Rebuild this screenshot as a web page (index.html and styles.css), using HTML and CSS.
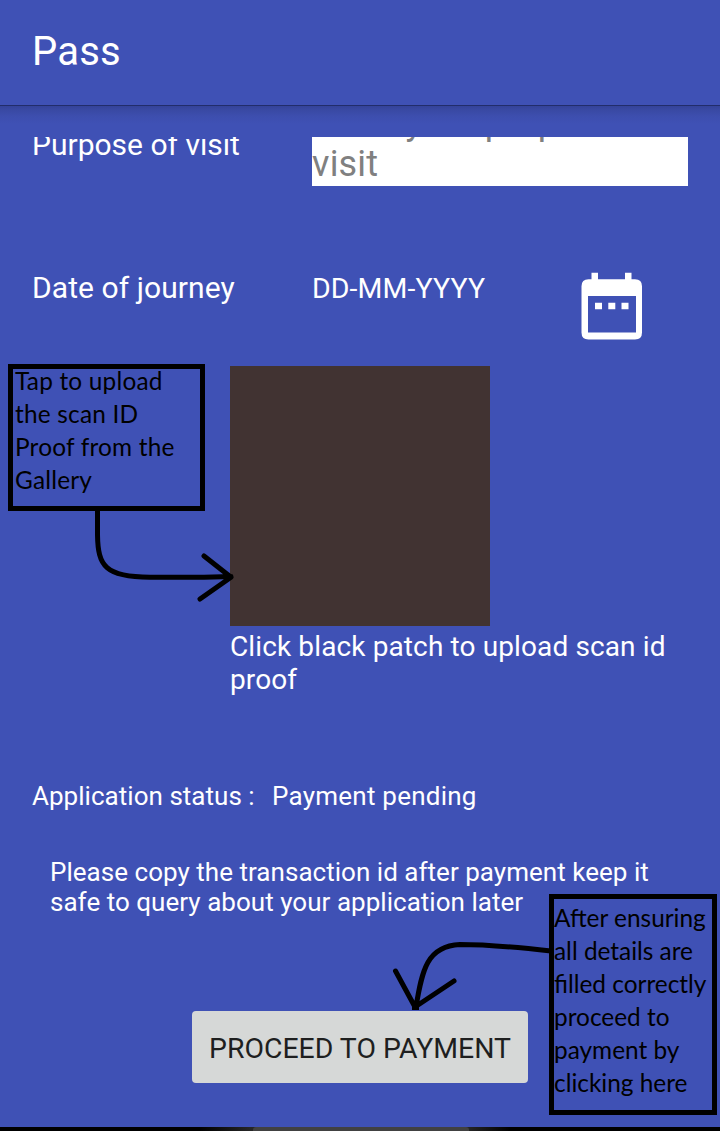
FILE: index.html
```html
<!DOCTYPE html>
<html lang="en">
<head>
<meta charset="utf-8">
<title>Pass</title>
<link rel="stylesheet" href="styles.css">
</head>
<body>
<div class="screen">
  <header class="app-bar"><h1 class="title">Pass</h1></header>
  <div class="shadow"></div>
  <main class="form">
    <div class="row purpose">
      <div class="label">Purpose of visit</div>
      <div class="field">Enter your purpose of<br>visit</div>
    </div>
    <div class="row date">
      <div class="label">Date of journey</div>
      <div class="value">DD-MM-YYYY</div>
      <svg class="calendar" viewBox="0 0 62 68" width="62" height="68">
        <path fill="#fff" fill-rule="evenodd" d="M10.500 .7h6.500v6.500h27V.7h6.500v6.500h3.500q7 0 7 7V60.500q0 7-7 7H7.500q-7 0-7-7V14.200q0-7 7-7h3zM7 24v36.500h48V24zM14 30.700h7v6.500h-7zM27.300 30.700h7v6.500h-7zM40.500 30.700h7v6.500h-7z"/>
      </svg>
    </div>
    <div class="upload">
      <div class="patch"></div>
      <p class="caption">Click black patch to upload scan id<br>proof</p>
    </div>
    <div class="status"><span class="status-key">Application status :</span><span class="status-value">Payment pending</span></div>
    <p class="note">Please copy the transaction id after payment keep it<br>safe to query about your application later</p>
    <button class="pay">PROCEED TO PAYMENT</button>
  </main>
  <footer class="nav-edge"><div class="nav-pill"></div></footer>

  <aside class="callout callout-id">Tap to upload<br>the scan ID<br>Proof from the<br>Gallery</aside>
  <aside class="callout callout-pay">After ensuring<br>all details are<br>filled correctly<br>proceed to<br>payment by<br>clicking here</aside>
  <svg class="arrows" viewBox="0 0 720 1131" width="720" height="1131">
    <g fill="none" stroke="#000" stroke-width="5" stroke-linecap="round" stroke-linejoin="round">
      <path d="M97.500 510V535C98 566 105 577 150 577.300H204L231 576.500M204 556L231 577.300L200 599"/>
      <path d="M551 951C515 947 478 944.500 460 944.500C427 946 422 970 416 1007M395.500 971L415 1007L454 981"/>
    </g>
    <path d="M412 1004h7v6h-7z"/>
  </svg>
</div>
</body>
</html>
```
FILE: styles.css
```css
* { box-sizing: border-box; }
body { margin: 0; background: #3f51b5; }
.screen {
  position: relative;
  width: 720px;
  height: 1131px;
  overflow: hidden;
  display: flex;
  flex-direction: column;
  background: #3f51b5;
  color: #fff;
  font-family: Roboto, sans-serif;
}
.app-bar { height: 105px; padding: 28px 32px 0; flex: none; }
.title { margin: 0; font-size: 40px; font-weight: 400; line-height: 47px; letter-spacing: 0.2px; }
.shadow {
  height: 32px;
  flex: none;
  border-top: 1px solid #222d6b;
  background: linear-gradient(#34439a 0, #3949a3 4px, #3d4eae 10px, #3f51b5 18px);
}
.form { flex: 1; overflow: hidden; display: flex; flex-direction: column; }
.row { display: flex; flex: none; padding-left: 32px; }
.purpose { height: 135px; }
.label { width: 280px; font-size: 30px; line-height: 36px; }
.purpose .label { margin-top: -10px; }
.field {
  width: 376px;
  height: 91px;
  margin-top: -42px;
  background: #fff;
  color: #808080;
  font-size: 36px;
  line-height: 42px;
  padding-top: 6px;
  letter-spacing: 0.2px;
}
.date { height: 94px; }
.date .label, .date .value { margin-top: -2px; }
.date .label { letter-spacing: 0.08px; }
.value { width: 269px; font-size: 28.5px; line-height: 38px; letter-spacing: 0.1px; }
.calendar { display: block; }
.upload { padding-left: 230px; height: 414px; flex: none; }
.patch { width: 260px; height: 260px; background: #413332; }
.caption { margin: 4px 0 0; font-size: 28px; line-height: 33px; letter-spacing: 0.12px; white-space: nowrap; }
.status { display: flex; padding-left: 32px; height: 77px; flex: none; font-size: 26px; line-height: 32px; white-space: nowrap; }
.status-key { width: 240px; letter-spacing: 0.03px; }
.status-value { letter-spacing: 0.24px; }
.note { margin: 0; padding-left: 50px; height: 154px; flex: none; font-size: 26px; line-height: 30px; letter-spacing: 0.03px; }
.pay {
  width: 336px;
  height: 72px;
  margin-left: 192px;
  flex: none;
  padding: 4px 0 0;
  border: 0;
  border-radius: 4px;
  background: #d6d8d7;
  color: #1e1f1f;
  font: 28.4px/36px Roboto, sans-serif;
}
.nav-edge { height: 4px; flex: none; background: linear-gradient(90deg, #000 200px, #262626 250px, #262626 468px, #000 510px); }
.nav-pill { width: 216px; height: 4px; margin-left: 253px; background: #414141; border-radius: 3px 3px 0 0; }
.callout {
  position: absolute;
  border: 5px solid #000;
  color: #000;
  font-family: Lato, sans-serif;
  font-size: 24.4px;
  line-height: 33px;
  white-space: nowrap;
}
.callout-id { left: 8px; top: 364px; width: 197px; height: 147px; padding-left: 2px; letter-spacing: 0.2px; }
.callout-id::before { content: ""; display: block; margin-top: -5px; }
.callout-pay { left: 549px; top: 894px; width: 168px; height: 221px; padding-top: 2px; }
.callout-pay::before { content: ""; display: block; }
.callout-pay { text-indent: -1px; }
.arrows { position: absolute; left: 0; top: 0; }
```
